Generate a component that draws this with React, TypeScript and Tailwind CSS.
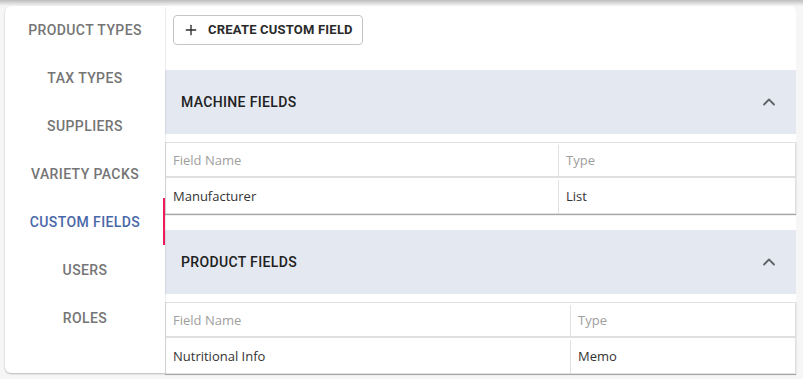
import { ChevronUp, Plus } from 'lucide-react'

const TABS = ['PRODUCT TYPES', 'TAX TYPES', 'SUPPLIERS', 'VARIETY PACKS', 'CUSTOM FIELDS', 'USERS', 'ROLES']
const ACTIVE = 'CUSTOM FIELDS'

interface FieldGroupProps {
  title: string
  nameCol: string
  rows: { name: string; type: string }[]
}

function FieldGroup({ title, nameCol, rows }: FieldGroupProps) {
  return (
    <section>
      <div className="flex h-16 items-center justify-between bg-[#e4e8f1] pl-4 pr-[17px]">
        <h2 className="text-[14px] font-medium tracking-[0.35px] text-[#212121]">{title}</h2>
        <ChevronUp size={20} strokeWidth={2.2} className="text-[#5f6368]" />
      </div>
      <div className="mt-2 border border-[#e0e0e0] font-['Open_Sans',sans-serif] text-[13px] shadow-[0_1px_1px_rgba(0,0,0,0.35)]">
        <div className={`grid ${nameCol} h-[35px] border-b-2 border-[#e0e0e0] pt-[2px] text-[#9e9e9e]`}>
          <div className="flex items-center border-r border-[#e0e0e0] px-[7px]">Field Name</div>
          <div className="flex items-center px-[7px]">Type</div>
        </div>
        {rows.map((r) => (
          <div key={r.name} className={`grid ${nameCol} h-[35px] pt-[2px] text-[#333]`}>
            <div className="flex items-center border-r border-[#e0e0e0] px-[7px]">{r.name}</div>
            <div className="flex items-center px-[7px]">{r.type}</div>
          </div>
        ))}
      </div>
    </section>
  )
}

export default function App() {
  return (
    <div className="min-h-screen bg-[#f6f6f6] font-['Roboto',sans-serif]">
      <div className="h-[6px] bg-gradient-to-b from-[#bdbdbd] to-[#f6f6f6]" />
      <div className="flex pl-[5px] pr-[7px]">
        <nav className="relative h-[367px] w-[160px] rounded-l-md bg-white shadow-[0_1px_2px_rgba(0,0,0,0.25)]">
          {TABS.map((t) => (
            <div
              key={t}
              className={`relative flex h-12 items-center justify-center text-[14px] font-medium tracking-[0.4px] ${
                t === ACTIVE ? 'text-[#4a68a8]' : 'text-[#757575]'
              }`}
            >
              {t}
              {t === ACTIVE && <span className="absolute right-0 top-0 h-[47px] w-[2px] bg-[#ee1a5a]" />}
            </div>
          ))}
        </nav>
        <main className="flex-1 rounded-tr-md bg-white pb-[2px]">
          <div className="pl-2 pt-[9px]">
            <button className="flex h-[30px] w-[190px] items-center gap-[9px] rounded border border-[#c4c4c4] pl-[9px] text-[13px] font-bold tracking-[0.2px] text-[#2a2a2a]">
              <Plus size={16} strokeWidth={2} />
              CREATE CUSTOM FIELD
            </button>
          </div>
          <div className="mt-[25px]">
            <FieldGroup title="MACHINE FIELDS" nameCol="grid-cols-[393px_1fr]" rows={[{ name: 'Manufacturer', type: 'List' }]} />
          </div>
          <div className="mt-4">
            <FieldGroup title="PRODUCT FIELDS" nameCol="grid-cols-[405px_1fr]" rows={[{ name: 'Nutritional Info', type: 'Memo' }]} />
          </div>
        </main>
      </div>
    </div>
  )
}
